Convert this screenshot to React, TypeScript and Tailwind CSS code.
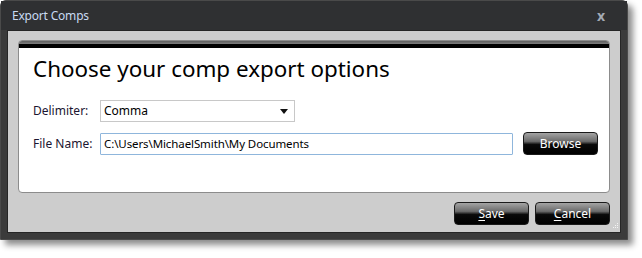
const FONT = "font-['Noto_Sans','Open_Sans',sans-serif]";

function DarkButton({ label, accessKey }: { label: string; accessKey?: boolean }) {
  return (
    <button
      type="button"
      className="flex h-[23px] w-[75px] shrink-0 items-center justify-center rounded-[4px] border border-[#1a1a1a] bg-[linear-gradient(to_bottom,#a4a4a4_0%,#6a6a6a_40%,#0a0a0a_55%,#000_100%)] text-[12px] leading-none text-white"
    >
      {accessKey ? (
        <>
          <span className="underline underline-offset-2">{label[0]}</span>
          {label.slice(1)}
        </>
      ) : (
        label
      )}
    </button>
  );
}

export default function App() {
  return (
    <div className={`h-[258px] w-[642px] bg-white ${FONT}`}>
      <div className="flex h-[240px] w-[628px] flex-col rounded-t-[6px] border border-[#4a4a4a] bg-[#3b3b3b] shadow-[5px_5px_6px_rgba(0,0,0,0.45)]">
        <div className="flex h-[29px] items-center justify-between bg-[#2f3032] pl-[11px] pr-[22px]">
          <span className="text-[12px] tracking-[-0.2px] text-[#c8daf3]">Export Comps</span>
          <span className="text-[14px] font-bold leading-none text-[#a3aab5]">x</span>
        </div>

        <div className="mx-[6px] mb-[6px] flex flex-1 flex-col border border-[#262626] bg-[#cdcdcd] px-[10px] pt-[9px]">
          <div className="flex h-[153px] flex-col overflow-hidden rounded-[4px] border border-[#8c8c8c] bg-white">
            <div className="h-[3px] bg-[linear-gradient(to_bottom,#5e5e5e,#7c7c7c)]" />
            <div className="h-[4px] bg-black" />

            <div className="pl-[14px] pr-[10px] pt-[7px]">
              <h1 className="text-[22.4px] leading-[28px] text-black">Choose your comp export options</h1>

              <div className="mt-[17px] flex items-center">
                <span className="w-[67px] shrink-0 text-[12px] text-[#1b1530]">Delimiter:</span>
                <div className="flex h-[22px] w-[195px] items-center justify-between border border-[#c8c8c8] bg-white pl-[3px] pr-[6px]">
                  <span className="text-[12px] text-black">Comma</span>
                  <svg width="8" height="5" viewBox="0 0 8 5">
                    <path d="M0 0H8L4 5Z" fill="#111" />
                  </svg>
                </div>
              </div>

              <div className="mt-[10px] flex items-center">
                <span className="w-[67px] shrink-0 text-[12px] text-[#1b1530]">File Name:</span>
                <div className="flex h-[22px] w-[413px] shrink-0 items-center rounded-[1px] border border-[#8fb6dc] bg-white pl-[3px]">
                  <span className="text-[11.5px] tracking-[-0.1px] text-black">C:\Users\MichaelSmith\My Documents</span>
                </div>
                <div className="ml-[10px]">
                  <DarkButton label="Browse" />
                </div>
              </div>
            </div>
          </div>

          <div className="relative mt-[9px] flex justify-end gap-[6px]">
            <DarkButton label="Save" accessKey />
            <DarkButton label="Cancel" accessKey />
            <svg className="absolute right-[-9px] top-[21px]" width="6" height="6" viewBox="0 0 6 6">
              <rect x="4" y="0" width="1" height="1" fill="#f4f4f4" />
              <rect x="2" y="2" width="1" height="1" fill="#f4f4f4" />
              <rect x="4" y="2" width="1" height="1" fill="#f4f4f4" />
              <rect x="0" y="4" width="1" height="1" fill="#f4f4f4" />
              <rect x="2" y="4" width="1" height="1" fill="#f4f4f4" />
              <rect x="4" y="4" width="1" height="1" fill="#f4f4f4" />
            </svg>
          </div>
        </div>
      </div>
    </div>
  );
}
